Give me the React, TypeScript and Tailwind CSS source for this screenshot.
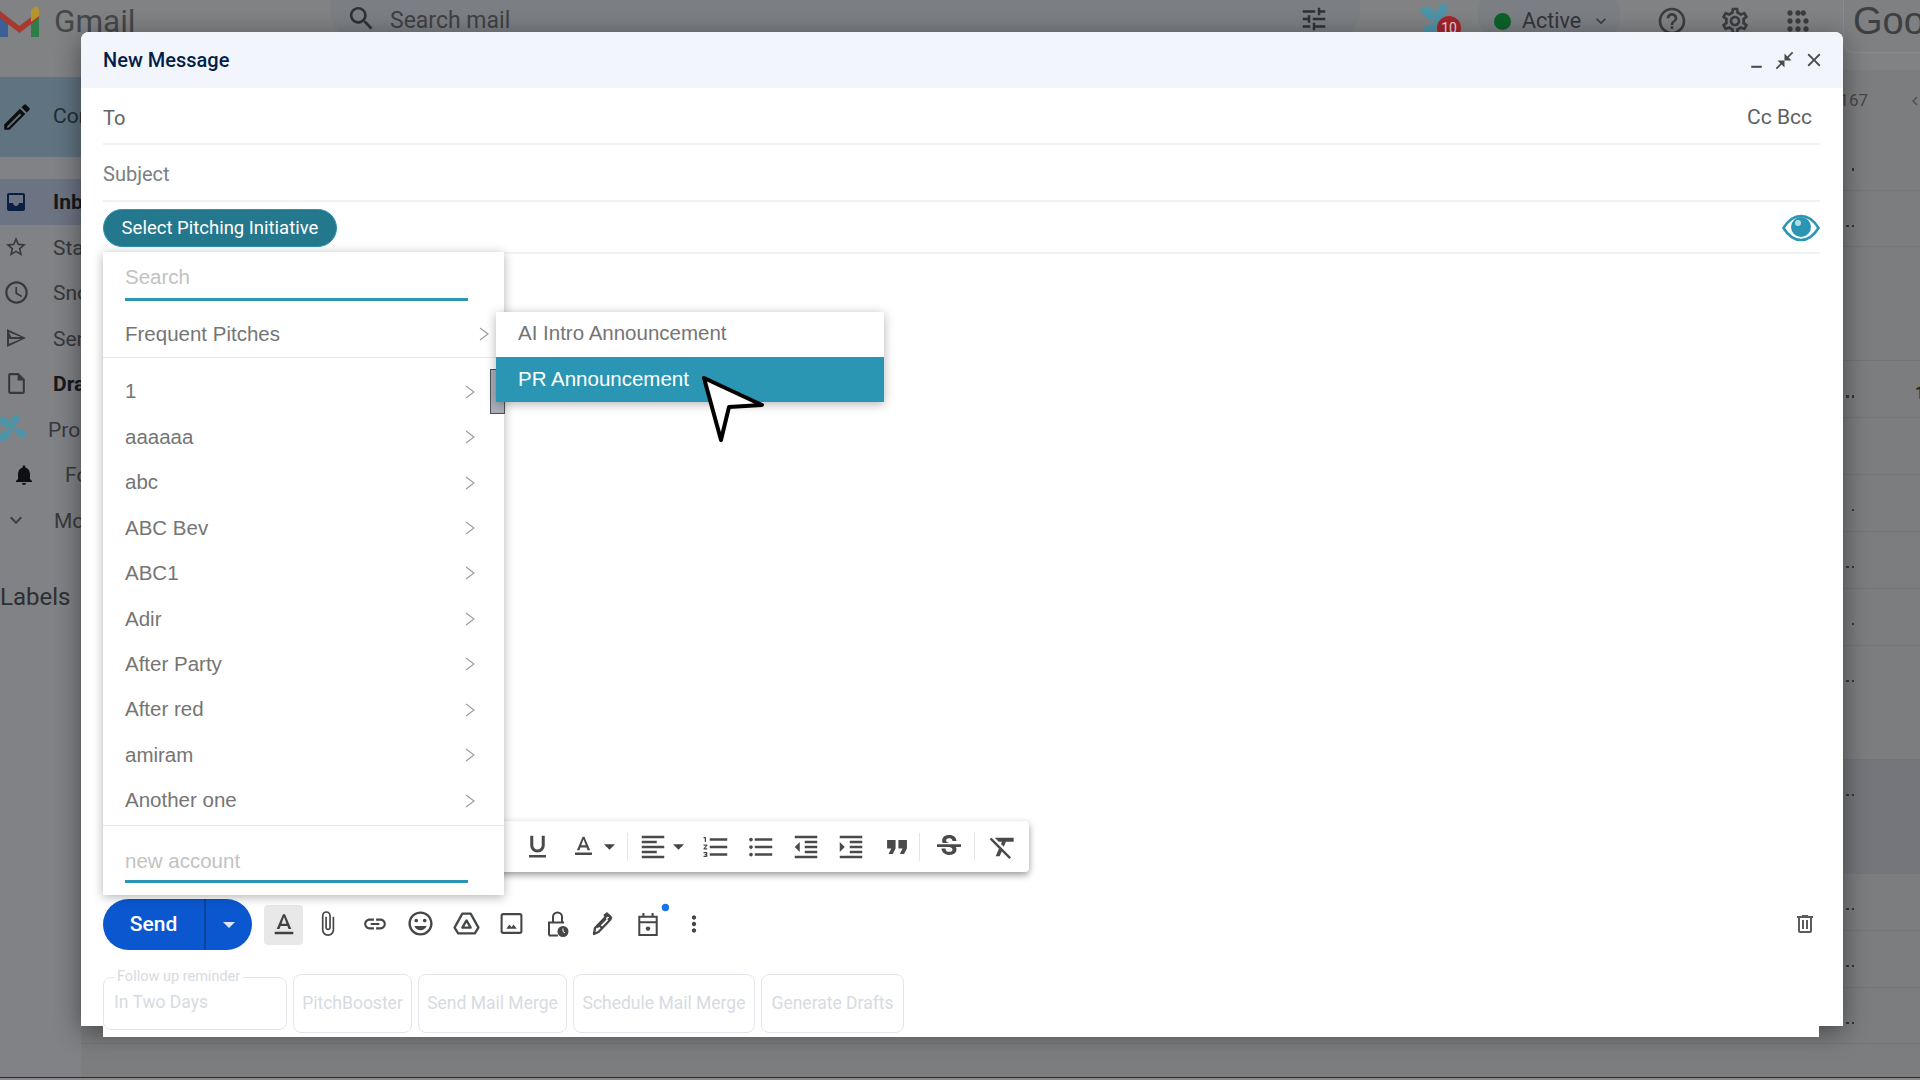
import React from "react";

const P = ({ d, className = "", vb = "0 0 24 24" }: { d: string; className?: string; vb?: string }) => (
  <svg viewBox={vb} className={`shrink-0 ${className}`} fill="currentColor" aria-hidden="true">
    <path d={d} />
  </svg>
);

const Pinwheel = ({ className = "" }: { className?: string }) => (
  <svg viewBox="0 0 32 32" className={className} fill="#4c94a8" aria-hidden="true">
    <path d="M16 16C13 9 15 3 20 0c4 2 5 5 3 8-2 3-4 5-7 8z" />
    <path d="M16 16c7-2 12 0 16 5-2 4-5 5-8 3-3-2-5-5-8-8z" />
    <path d="M16 16c-1 7-5 12-11 14-3-3-3-6-1-9 3-3 7-4 12-5z" />
    <path d="M16 16C10 15 4 12 1 6c3-3 6-4 9-2 3 2 5 7 6 12z" />
  </svg>
);

const Chevron = ({ className = "" }: { className?: string }) => (
  <svg viewBox="0 0 10 14" className={className} fill="none" stroke="#9a9a9a" strokeWidth="1.1" aria-hidden="true">
    <path d="M1 1l8 6-8 6" />
  </svg>
);

const Caret = () => (
  <svg viewBox="0 0 10 5" className="w-[11px] h-[6px] text-[#444] shrink-0" fill="currentColor" aria-hidden="true">
    <path d="M0 0h10L5 5z" />
  </svg>
);

const side = [
  { t: "Inbox", bold: true, box: "w-[32px] ml-0 mr-[21px]", ic: <P className="w-[24px] h-[24px] text-[#0c1f42]" d="M19 3H5c-1.1 0-2 .9-2 2v14c0 1.1.9 2 2 2h14c1.1 0 2-.9 2-2V5c0-1.1-.9-2-2-2zm0 10h-4c0 1.66-1.34 3-3 3s-3-1.34-3-3H5V5h14v8z" />, row: "bg-[#6c7383]" },
  { t: "Starred", box: "w-[32px] ml-0 mr-[21px]", ic: <P className="w-[24px] h-[24px] text-[#38393c]" d="M22 9.24l-7.19-.62L12 2 9.19 8.63 2 9.24l5.46 4.73L5.82 21 12 17.27 18.18 21l-1.63-7.03L22 9.24zM12 15.4l-3.76 2.27 1-4.28-3.32-2.88 4.38-.38L12 6.1l1.71 4.04 4.38.38-3.32 2.88 1 4.28L12 15.4z" /> },
  { t: "Snoozed", box: "w-[32px] ml-0 mr-[21px]", ic: <P className="w-[27px] h-[27px] text-[#38393c]" d="M11.99 2C6.47 2 2 6.48 2 12s4.47 10 9.99 10C17.52 22 22 17.52 22 12S17.52 2 11.99 2zM12 20c-4.42 0-8-3.58-8-8s3.58-8 8-8 8 3.58 8 8-3.58 8-8 8zm.5-13H11v6l5.25 3.15.75-1.23-4.5-2.67z" /> },
  { t: "Sent", box: "w-[32px] ml-0 mr-[21px]", ic: <P className="w-[24px] h-[24px] text-[#38393c]" d="M3 3v18l19-9L3 3zm2 3.2L16.8 11H7.2L5 6.2zM5 17.8V13h11.8L5 17.8z" /> },
  { t: "Drafts", bold: true, box: "w-[32px] ml-0 mr-[21px]", ic: <P className="w-[25px] h-[25px] text-[#38393c]" d="M14 2H6c-1.1 0-2 .9-2 2v16c0 1.1.9 2 2 2h12c1.1 0 2-.9 2-2V8l-6-6zm4 18H6V4h7v5h5v11z" /> },
  { t: "Pro", box: "w-[30px] -ml-[3px] mr-[21px]", ic: <Pinwheel className="w-[30px] h-[30px]" /> },
  { t: "Follow", box: "w-[24px] ml-[12px] mr-[29px]", ic: <P className="w-[24px] h-[24px] text-[#0f1012]" d="M12 22c1.1 0 2-.9 2-2h-4c0 1.1.9 2 2 2zm6-6v-5c0-3.07-1.63-5.64-4.5-6.32V4c0-.83-.67-1.5-1.5-1.5s-1.5.67-1.5 1.5v.68C7.64 5.36 6 7.92 6 11v5l-2 2v1h16v-1l-2-2z" /> },
  { t: "More", box: "w-[32px] ml-0 mr-[22px]", ic: <P className="w-[24px] h-[24px] text-[#3e3f42]" d="M16.59 8.59L12 13.17 7.41 8.59 6 10l6 6 6-6z" /> },
];

const rows = [
  { h: "h-[56.5px]", d: 1 },
  { h: "h-[56.5px]", d: 2 },
  { h: "h-[114px]", d: 0 },
  { h: "h-[56.5px]", d: 2, one: true },
  { h: "h-[57px]", d: 0 },
  { h: "h-[57px]", d: 1 },
  { h: "h-[57px]", d: 2 },
  { h: "h-[57px]", d: 1 },
  { h: "h-[114px]", d: 2 },
  { h: "h-[114px]", d: 2, sel: true },
  { h: "h-[57px]", d: 2 },
  { h: "h-[57px]", d: 2 },
  { h: "h-[56px]", d: 2 },
];

const accounts = ["1", "aaaaaa", "abc", "ABC Bev", "ABC1", "Adir", "After Party", "After red", "amiram", "Another one"];

const fmt = {
  underline: "M12 17c3.31 0 6-2.69 6-6V3h-2.5v8c0 1.93-1.57 3.5-3.5 3.5S8.5 12.93 8.5 11V3H6v8c0 3.31 2.69 6 6 6zm-7 2v2h14v-2H5z",
  color: "M5 17v2h14v-2H5zm4.5-4.2h5l.9 2.2h2.1L12.75 4h-1.5L6.5 15h2.1l.9-2.2zM12 5.98L13.87 11h-3.74L12 5.98z",
  align: "M15 15H3v2h12v-2zm0-8H3v2h12V7zM3 13h18v-2H3v2zm0 8h18v-2H3v2zM3 3v2h18V3H3z",
  num: "M2 17h2v.5H3v1h1v.5H2v1h3v-4H2v1zm1-9h1V4H2v1h1v3zm-1 3h1.8L2 13.1v.9h3v-1H3.2L5 10.9V10H2v1zm5-6v2h14V5H7zm0 14h14v-2H7v2zm0-6h14v-2H7v2z",
  bullet: "M4 10.5c-.83 0-1.5.67-1.5 1.5s.67 1.5 1.5 1.5 1.5-.67 1.5-1.5-.67-1.5-1.5-1.5zm0-6c-.83 0-1.5.67-1.5 1.5S3.17 7.5 4 7.5 5.5 6.83 5.5 6 4.83 4.5 4 4.5zm0 12c-.83 0-1.5.68-1.5 1.5s.68 1.5 1.5 1.5 1.5-.68 1.5-1.5-.67-1.5-1.5-1.5zM7 19h14v-2H7v2zm0-6h14v-2H7v2zm0-8v2h14V5H7z",
  dec: "M11 17h10v-2H11v2zm-8-5l4 4V8l-4 4zm0 9h18v-2H3v2zM3 3v2h18V3H3zm8 6h10V7H11v2zm0 4h10v-2H11v2z",
  inc: "M3 21h18v-2H3v2zM3 8v8l4-4-4-4zm8 9h10v-2H11v2zM3 3v2h18V3H3zm8 6h10V7H11v2zm0 4h10v-2H11v2z",
  quote: "M6 17h3l2-4V7H5v6h3zm8 0h3l2-4V7h-6v6h3z",
  strike: "M6.85 7.08C6.85 4.37 9.45 3 12.24 3c1.64 0 3 .49 3.9 1.28.77.65 1.46 1.73 1.46 3.24h-3.01c0-.31-.05-.59-.15-.85-.29-.86-1.2-1.28-2.25-1.28-1.86 0-2.34 1.02-2.34 1.7 0 .48.25.88.74 1.21.38.25.77.48 1.41.7H7.39c-.21-.34-.54-.89-.54-1.92zM21 12v-2H3v2h9.62c1.15.45 1.96.75 1.96 1.97 0 1-.81 1.67-2.28 1.67-1.54 0-2.93-.54-2.93-2.51H6.4c0 .55.08 1.13.24 1.58.81 2.29 3.29 3.3 5.67 3.3 2.27 0 5.3-.89 5.3-4.05 0-.3-.01-1.16-.48-1.96H21z",
  clear: "M3.27 5L2 6.27l6.97 6.97L6.5 19h3l1.57-3.66L16.73 21 18 19.73 3.55 5.27 3.27 5zM6 5v.18L8.82 8h2.4l-.72 1.68 2.1 2.1L14.21 8H20V5H6z",
};

const Sep = () => <div className="w-px h-[28px] bg-[#e5e5e5] shrink-0" />;

export default function App() {
  return (
    <div className="relative w-[1920px] h-[1080px] overflow-hidden flex flex-col bg-[#7c7d7e] font-[Roboto,sans-serif]">
      {/* Gmail page behind the overlay */}
      <header className="h-[70px] shrink-0 flex items-start bg-[#818283] text-[#3b3d40]">
        <div className="w-[330px] shrink-0 flex items-center pt-[5px]">
          <svg viewBox="0 0 39 31" className="w-[39px] h-[31px]" aria-hidden="true">
            <path d="M0 8v23h8V13z" fill="#3c5f96" />
            <path d="M31 13v18h8V8z" fill="#2f7d4b" />
            <path d="M0 5l19.5 15L39 5v7L19.5 27 0 12z" fill="#a8392f" />
            <path d="M31 4l4-3c2-1 4 1 4 3v6l-8 6z" fill="#b4952b" />
          </svg>
          <span className="ml-[15px] mt-[1px] text-[31.5px] leading-[31px] text-[#45474a]">Gmail</span>
        </div>
        <div className="w-[1030px] h-[62px] -mt-[22px] pt-[22px] pl-[16px] flex items-start rounded-[30px] bg-[#7b7e83]">
          <P className="w-[31px] h-[31px] mt-[3px] text-[#2f3134]" d="M15.5 14h-.79l-.28-.27C15.41 12.59 16 11.11 16 9.5 16 5.91 13.09 3 9.5 3S3 5.91 3 9.5 5.91 16 9.5 16c1.61 0 3.09-.59 4.23-1.57l.27.28v.79l5 4.99L20.49 19l-4.99-5zm-6 0C7.01 14 5 11.99 5 9.5S7.01 5 9.5 5 14 7.01 14 9.5 11.99 14 9.5 14z" />
          <span className="ml-[13px] mt-[8px] text-[23px] leading-[26px] text-[#3f4144]">Search mail</span>
          <P className="ml-auto mr-[31px] mt-[4px] w-[30px] h-[30px] text-[#2f3134]" d="M3 17v2h6v-2H3zM3 5v2h10V5H3zm10 16v-2h8v-2h-8v-2h-2v6h2zM7 9v2H3v2h4v2h2V9H7zm14 4v-2H11v2h10zm-6-4h2V7h4V5h-4V3h-2v6z" />
        </div>
        <div className="relative w-[42px] h-[40px] ml-[59px]">
          <Pinwheel className="w-[38px] h-[38px] mt-[3px]" />
          <span className="absolute left-[18px] top-[16px] w-[24px] h-[24px] rounded-full bg-[#a2262f] text-center text-[14px] leading-[24px] text-[#e8d9d9]">10</span>
        </div>
        <div className="w-[142px] h-[52px] -mt-[11px] pt-[11px] ml-[17px] flex items-start rounded-[24px] bg-[#7b7e83]">
          <div className="w-[17px] h-[17px] mt-[13px] ml-[16px] rounded-full bg-[#0d6128]" />
          <span className="ml-[11px] mt-[9px] text-[21.5px] leading-[24px] text-[#33353a]">Active</span>
          <P className="w-[20px] h-[20px] mt-[11px] ml-[10px] text-[#3b3d40]" d="M16.59 8.59L12 13.17 7.41 8.59 6 10l6 6 6-6z" />
        </div>
        <div className="flex items-center ml-[36px] pt-[5px] gap-[30.5px] text-[#3a3c3f]">
          <P className="w-[32px] h-[32px]" d="M11 18h2v-2h-2v2zm1-16C6.48 2 2 6.48 2 12s4.48 10 10 10 10-4.48 10-10S17.52 2 12 2zm0 18c-4.41 0-8-3.59-8-8s3.59-8 8-8 8 3.59 8 8-3.59 8-8 8zm0-14c-2.21 0-4 1.79-4 4h2c0-1.1.9-2 2-2s2 .9 2 2c0 2-3 1.75-3 5h2c0-2.25 3-2.5 3-5 0-2.21-1.79-4-4-4z" />
          <P className="w-[32px] h-[32px]" d="M19.43 12.98c.04-.32.07-.64.07-.98 0-.34-.03-.66-.07-.98l2.11-1.65c.19-.15.24-.42.12-.64l-2-3.46c-.09-.16-.26-.25-.44-.25-.06 0-.12.01-.17.03l-2.49 1c-.52-.4-1.08-.73-1.69-.98l-.38-2.65C14.46 2.18 14.25 2 14 2h-4c-.25 0-.46.18-.49.42l-.38 2.65c-.61.25-1.17.59-1.69.98l-2.49-1c-.06-.02-.12-.03-.18-.03-.17 0-.34.09-.43.25l-2 3.46c-.13.22-.07.49.12.64l2.11 1.65c-.04.32-.07.65-.07.98 0 .33.03.66.07.98l-2.11 1.65c-.19.15-.24.42-.12.64l2 3.46c.09.16.26.25.44.25.06 0 .12-.01.17-.03l2.49-1c.52.4 1.08.73 1.69.98l.38 2.65c.03.24.24.42.49.42h4c.25 0 .46-.18.49-.42l.38-2.65c.61-.25 1.17-.59 1.69-.98l2.49 1c.06.02.12.03.18.03.17 0 .34-.09.43-.25l2-3.46c.12-.22.07-.49-.12-.64l-2.11-1.65zm-1.98-1.71c.04.31.05.52.05.73 0 .21-.02.43-.05.73l-.14 1.13.89.7 1.08.84-.7 1.21-1.27-.51-1.04-.42-.9.68c-.43.32-.84.56-1.25.73l-1.06.43-.16 1.13-.2 1.35h-1.4l-.19-1.35-.16-1.13-1.06-.43c-.43-.18-.83-.41-1.23-.71l-.91-.7-1.06.43-1.27.51-.7-1.21 1.08-.84.89-.7-.14-1.13c-.03-.31-.05-.54-.05-.74s.02-.43.05-.73l.14-1.13-.89-.7-1.08-.84.7-1.21 1.27.51 1.04.42.9-.68c.43-.32.84-.56 1.25-.73l1.06-.43.16-1.13.2-1.35h1.39l.19 1.35.16 1.13 1.06.43c.43.18.83.41 1.23.71l.91.7 1.06-.43 1.27-.51.7 1.21-1.07.85-.89.7.14 1.13zM12 8c-2.21 0-4 1.79-4 4s1.79 4 4 4 4-1.79 4-4-1.79-4-4-4zm0 6c-1.1 0-2-.9-2-2s.9-2 2-2 2 .9 2 2-.9 2-2 2z" />
          <P className="ml-[1px] w-[32px] h-[32px]" d="M6 8c1.1 0 2-.9 2-2s-.9-2-2-2-2 .9-2 2 .9 2 2 2zm6 12c1.1 0 2-.9 2-2s-.9-2-2-2-2 .9-2 2 .9 2 2 2zm-6 0c1.1 0 2-.9 2-2s-.9-2-2-2-2 .9-2 2 .9 2 2 2zm0-6c1.1 0 2-.9 2-2s-.9-2-2-2-2 .9-2 2 .9 2 2 2zm6 0c1.1 0 2-.9 2-2s-.9-2-2-2-2 .9-2 2 .9 2 2 2zm6-8c0-1.1-.9-2-2-2s-2 .9-2 2 .9 2 2 2 2-.9 2-2zm-6 2c1.1 0 2-.9 2-2s-.9-2-2-2-2 .9-2 2 .9 2 2 2zm6 6c1.1 0 2-.9 2-2s-.9-2-2-2-2 .9-2 2 .9 2 2 2zm0 6c1.1 0 2-.9 2-2s-.9-2-2-2-2 .9-2 2 .9 2 2 2z" />
        </div>
        <div className="ml-auto w-[77px] h-[53px] pl-[9px] rounded-bl-xl border-l border-b border-[#8a8b8d] bg-[#7f8082] overflow-hidden">
          <span className="block text-[38px] leading-[42px] text-[#3d3f42] whitespace-nowrap font-[Liberation_Sans,sans-serif]">Google</span>
        </div>
      </header>

      <div className="flex flex-1 min-h-0">
        <aside className="w-[81px] shrink-0 overflow-hidden pt-[7px] bg-[#808285] text-[21px] text-[#37393c]">
          <div className="h-[80px] flex items-center bg-[#5f7380] whitespace-nowrap">
            <P className="w-[34px] h-[34px] text-[#0d0f11]" d="M3 17.25V21h3.75L17.81 9.94l-3.75-3.75L3 17.25zm2.92 2.33H5v-.92l9.06-9.06.92.92L5.92 19.58zM20.71 7.04a1 1 0 000-1.41l-2.34-2.34a1 1 0 00-1.41 0l-1.83 1.83 3.75 3.75 1.83-1.83z" />
            <span className="ml-[19px] text-[#1f2d36]">Compose</span>
          </div>
          <div className="mt-[22px]">
            {side.map((s) => (
              <div key={s.t} className={`h-[45.5px] flex items-center whitespace-nowrap ${s.row ?? ""}`}>
                <div className={`${s.box} shrink-0 flex justify-center`}>{s.ic}</div>
                <span className={s.bold ? "font-bold text-[#16181c] pt-[1px]" : "pt-[2px]"}>{s.t}</span>
              </div>
            ))}
          </div>
          <div className="mt-[39px] text-[24px] leading-[30px] text-[#2d2f32]">Labels</div>
        </aside>

        <main className="flex-1 min-w-0 flex flex-col">
          <div className="h-[64px] flex items-center justify-end pr-[4px] text-[#45474a]">
            <span className="mr-[38px] text-[17px] -mt-[2px]">167</span>
            <P className="w-[18px] h-[18px] -mt-[2px] -mr-[8px] text-[#4e5053]" d="M15.41 7.41L14 6l-6 6 6 6 1.41-1.41L10.83 12z" />
          </div>
          {rows.map((r, i) => (
            <div key={i} className={`${r.h} relative shrink-0 border-b border-[#747577] flex items-start pt-[34px] justify-end pr-[66px] ${r.sel ? "bg-[#74767b]" : ""}`}>
              <div className="flex gap-[3px]">
                {r.d > 0 && <div className="w-[2.5px] h-[2.5px] bg-[#33363a]" />}
                {r.d > 1 && <div className="w-[2.5px] h-[2.5px] bg-[#33363a]" />}
              </div>
              {r.one && <span className="absolute right-0 top-[18px] text-[18px] font-bold text-[#3a2305] w-[5px] overflow-hidden">1</span>}
            </div>
          ))}
        </main>
      </div>
      <div className="absolute left-0 right-0 bottom-0 h-[3px] border-t border-[#2b2b2b] bg-[#8a8a8a]" />

      {/* Compose window */}
      <section className="absolute left-[81px] top-[32px] w-[1762px] h-[994px] flex flex-col bg-white rounded-t-lg shadow-[0_6px_26px_rgba(0,0,0,0.45)]">
        <div className="h-[56px] shrink-0 rounded-t-lg bg-[#f2f6fc] flex items-center pl-[22px] pr-[18px]">
          <span className="text-[20px] font-medium text-[#041e49] -mt-[1px]">New Message</span>
          <div className="ml-auto flex items-center gap-[8px] text-[#4a4a4a]">
            <P className="w-[21px] h-[21px] ml-[1px] -mr-[1px]" d="M6 18h12v2.4H6z" />
            <P className="w-[21px] h-[21px]" d="M22 3.41L16.71 8.7 20 12h-8V4l3.29 3.29L20.59 2 22 3.41zM3.41 22l5.29-5.29L12 20v-8H4l3.29 3.29L2 20.59 3.41 22z" />
            <P className="w-[22px] h-[22px]" d="M19 6.41L17.59 5 12 10.59 6.41 5 5 6.41 10.59 12 5 17.59 6.41 19 12 13.41 17.59 19 19 17.59 13.41 12z" />
          </div>
        </div>
        <div className="px-[22px] pr-[23px] text-[20px] shrink-0">
          <div className="h-[57px] flex items-center pt-[4px] border-b-2 border-[#eff3f3] text-[#5f6368]">
            <span>To</span>
            <span className="ml-auto mr-[8px] text-[21px] text-[#5b5f63]">Cc Bcc</span>
          </div>
          <div className="h-[57px] flex items-center pt-[2px] border-b-2 border-[#eff3f3] text-[#7b7f83]">
            <span>Subject</span>
          </div>
          <div className="h-[52px] flex items-center border-b-2 border-[#eff3f3]">
            <div className="w-[234px] h-[38px] mt-[2px] pt-[2px] rounded-full bg-[#23788d] border border-[#2b96b3] flex items-center justify-center text-[18.5px] text-white whitespace-nowrap">
              Select Pitching Initiative
            </div>
            <svg viewBox="0 0 38 30" className="ml-auto w-[38px] h-[30px] mt-[2px]" aria-hidden="true">
              <path d="M1.5 15C7 6 13 3 19 3s12 3 17.5 12C31 24 25 27 19 27S7 24 1.5 15z" fill="none" stroke="#2b96b3" strokeWidth="2.6" />
              <circle cx="19" cy="14" r="10" fill="#2b96b3" />
              <circle cx="16" cy="10" r="3" fill="#b4dbe6" />
            </svg>
          </div>
        </div>

        <div className="h-[645px] shrink-0" />

        <div className="h-[51px] shrink-0 mx-[22px] mr-[24px] flex items-center text-[#444746]">
          <div className="w-[149px] h-[51px] flex items-center rounded-full bg-[#0b57d0] text-white">
            <span className="w-[101px] text-center text-[21px] font-medium">Send</span>
            <div className="w-[48px] h-full border-l-2 border-[#08449f] flex items-center justify-center">
              <svg viewBox="0 0 10 5" className="w-[12px] h-[6px]" fill="#dfe8f8" aria-hidden="true">
                <path d="M0 0h10L5 5z" />
              </svg>
            </div>
          </div>
          <div className="ml-[12px] w-[39px] h-[40px] rounded bg-[#e8e8e8] flex items-center justify-center">
            <P className="w-[32px] h-[32px] text-[#424242]" d={fmt.color} />
          </div>
          <div className="flex items-center -mt-[2px]">
            <P className="ml-[11px] w-[27px] h-[27px]" d="M16.5 6v11.5c0 2.21-1.79 4-4 4s-4-1.79-4-4V5c0-1.38 1.12-2.5 2.5-2.5s2.5 1.12 2.5 2.5v10.5c0 .55-.45 1-1 1s-1-.45-1-1V6H10v9.5c0 1.38 1.12 2.5 2.5 2.5s2.5-1.12 2.5-2.5V5c0-2.21-1.79-4-4-4S7 2.79 7 5v12.5c0 3.04 2.46 5.5 5.5 5.5s5.5-2.46 5.5-5.5V6h-1.5z" />
            <P className="ml-[21px] w-[26px] h-[26px]" d="M3.9 12c0-1.71 1.39-3.1 3.1-3.1h4V7H7c-2.76 0-5 2.24-5 5s2.24 5 5 5h4v-1.9H7c-1.71 0-3.1-1.39-3.1-3.1zM8 13h8v-2H8v2zm9-6h-4v1.9h4c1.71 0 3.1 1.39 3.1 3.1s-1.39 3.1-3.1 3.1h-4V17h4c2.76 0 5-2.24 5-5s-2.24-5-5-5z" />
            <P className="ml-[18px] w-[29px] h-[29px]" d="M11.99 2C6.47 2 2 6.48 2 12s4.47 10 9.99 10C17.52 22 22 17.52 22 12S17.52 2 11.99 2zM12 20c-4.42 0-8-3.58-8-8s3.58-8 8-8 8 3.58 8 8-3.58 8-8 8zm3.5-9c.83 0 1.5-.67 1.5-1.5S16.33 8 15.5 8 14 8.67 14 9.5s.67 1.5 1.5 1.5zm-7 0c.83 0 1.5-.67 1.5-1.5S9.33 8 8.5 8 7 8.67 7 9.5 7.67 11 8.5 11zm3.5 6.5c2.33 0 4.31-1.46 5.11-3.5H6.89c.8 2.04 2.78 3.5 5.11 3.5z" />
            <svg viewBox="0 0 26 24" className="ml-[18px] w-[27px] h-[25px]" fill="none" stroke="currentColor" strokeWidth="2.2" strokeLinejoin="round" aria-hidden="true">
              <path d="M9 2.5h8L24.5 16l-3.5 5.5H5L1.5 16z" />
              <path d="M13 9l4 7H9z" />
            </svg>
            <svg viewBox="0 0 24 24" className="ml-[19px] w-[25px] h-[25px]" aria-hidden="true">
              <rect x="2.5" y="3" width="19" height="18" rx="1.5" fill="none" stroke="currentColor" strokeWidth="2" />
              <path d="M7 17l3-4 2 2.5 2-2.5 3 4z" fill="currentColor" />
            </svg>
            <svg viewBox="0 0 24 28" className="ml-[21px] w-[24px] h-[28px]" aria-hidden="true">
              <path d="M4 25.5V12.5h15M8 12V7a4.5 4.5 0 019 0v5M4 25.5h9" fill="none" stroke="currentColor" strokeWidth="2" />
              <circle cx="18" cy="21.5" r="5.5" fill="currentColor" />
              <path d="M18 18.5v3l2 1.5" fill="none" stroke="#fff" strokeWidth="1" />
            </svg>
            <svg viewBox="0 0 24 24" className="ml-[21px] w-[24px] h-[24px]" fill="none" stroke="currentColor" strokeWidth="2.3" strokeLinejoin="round" aria-hidden="true">
              <path d="M4 22l1-6L16 4.5a2.5 2.5 0 014 3.5L8.5 20z" />
              <path d="M7 15.5l9-9M9 13l3 3M14 4l3-2.5 4 4-3 2.5" />
            </svg>
            <svg viewBox="0 0 24 28" className="ml-[23px] w-[22px] h-[26px] overflow-visible shrink-0" aria-hidden="true">
              <path d="M2.5 6h19v20h-19zM2.5 12h19M7 2v5M17 2v5" fill="none" stroke="currentColor" strokeWidth="2.2" />
              <circle cx="12" cy="19" r="2.4" fill="currentColor" />
              <circle cx="31" cy="-4" r="4" fill="#1a73e8" />
            </svg>
            <P className="ml-[22px] w-[26px] h-[26px]" d="M12 8c1.1 0 2-.9 2-2s-.9-2-2-2-2 .9-2 2 .9 2 2 2zm0 2c-1.1 0-2 .9-2 2s.9 2 2 2 2-.9 2-2-.9-2-2-2zm0 6c-1.1 0-2 .9-2 2s.9 2 2 2 2-.9 2-2-.9-2-2-2z" />
          </div>
          <P className="ml-auto mr-[2px] -mt-[2px] w-[24px] h-[24px] text-[#5c5c5c]" d="M15 4V3H9v1H4v2h1v13c0 1.1.9 2 2 2h10c1.1 0 2-.9 2-2V6h1V4h-5zm2 15H7V6h10v13zM9 8h2v9H9zm4 0h2v9h-2z" />
        </div>

        <div className="h-[87px] shrink-0 ml-[22px] mr-[24px] bg-white flex items-start pt-[19px] gap-[6px] text-[17.5px] text-[#d6dbe2]">
          <fieldset className="w-[184px] h-[61px] shrink-0 border-[1.5px] border-[#e2e6ec] rounded-lg pl-[10px]">
            <legend className="px-[3px] text-[14.5px] leading-[16px] text-[#d6dbe2]">Follow up reminder</legend>
            <div className="mt-[5px] leading-[24px]">In Two Days</div>
          </fieldset>
          <div className="w-[119px] h-[59px] mt-[5px] shrink-0 border-[1.5px] border-[#e2e6ec] rounded-lg flex items-center justify-center">PitchBooster</div>
          <div className="w-[149px] h-[59px] mt-[5px] shrink-0 border-[1.5px] border-[#e2e6ec] rounded-lg flex items-center justify-center">Send Mail Merge</div>
          <div className="w-[182px] h-[59px] mt-[5px] shrink-0 border-[1.5px] border-[#e2e6ec] rounded-lg flex items-center justify-center">Schedule Mail Merge</div>
          <div className="w-[143px] h-[59px] mt-[5px] shrink-0 border-[1.5px] border-[#e2e6ec] rounded-lg flex items-center justify-center">Generate Drafts</div>
        </div>

        {/* Floating format bar */}
        <div className="absolute left-[320px] top-[789px] w-[628px] h-[51px] pl-[114px] rounded-r bg-white shadow-[0_3px_7px_rgba(0,0,0,0.4)] flex items-center text-[#4a4a4a]">
          <div className="w-[46px] flex justify-center"><P className="w-[29px] h-[29px]" d={fmt.underline} /></div>
          <div className="w-[66px] pl-[8px] flex items-center gap-[6px]"><P className="w-[29px] h-[29px]" d={fmt.color} /><Caret /></div>
          <Sep />
          <div className="w-[66px] pl-[10px] flex items-center gap-[5px]"><P className="w-[30px] h-[30px]" d={fmt.align} /><Caret /></div>
          <div className="w-[46px] flex justify-center -ml-[1px]"><P className="w-[30px] h-[30px]" d={fmt.num} /></div>
          <div className="w-[45px] flex justify-center"><P className="w-[30px] h-[30px]" d={fmt.bullet} /></div>
          <div className="w-[45px] flex justify-center"><P className="w-[30px] h-[30px]" d={fmt.dec} /></div>
          <div className="w-[46px] flex justify-center"><P className="w-[30px] h-[30px]" d={fmt.inc} /></div>
          <div className="w-[45px] flex justify-center"><P className="w-[34px] h-[34px]" d={fmt.quote} /></div>
          <Sep />
          <div className="w-[54px] pl-[4px] flex justify-center"><P className="w-[32px] h-[32px]" d={fmt.strike} /></div>
          <Sep />
          <div className="w-[52px] flex justify-center ml-[2px]"><P className="w-[32px] h-[32px]" d={fmt.clear} /></div>
        </div>

        {/* Pitch menu */}
        <div className="absolute left-[22px] top-[220px] w-[401px] h-[643px] flex flex-col bg-white shadow-[0_2px_10px_rgba(0,0,0,0.3)] font-[Liberation_Sans,Arial,sans-serif] text-[20.5px] text-[#757575]">
          <div className="h-[49px] mx-[22px] mr-[36px] border-b-[3px] border-[#2b96b3] flex items-end pb-[5px] text-[#c2c2c2] shrink-0">Search</div>
          <div className="h-[57px] pl-[22px] pr-[15px] flex items-center border-b border-[#e6e6e6] shrink-0 pt-[10px]">
            <span>Frequent Pitches</span>
            <Chevron className="ml-auto w-[10px] h-[14px]" />
          </div>
          <div className="pt-[11px] flex-1">
            {accounts.map((a) => (
              <div key={a} className="h-[45.45px] pl-[22px] pr-[29px] flex items-center">
                <span>{a}</span>
                <Chevron className="ml-auto w-[10px] h-[14px]" />
              </div>
            ))}
          </div>
          <div className="h-[70px] border-t border-[#e6e6e6] shrink-0 pt-[20px]">
            <div className="h-[37px] mx-[22px] mr-[36px] border-b-[3px] border-[#2b96b3] flex items-center pb-[4px] text-[#c2c2c2]">new account</div>
          </div>
        </div>

        <div className="absolute left-[409px] top-[337px] w-[15px] h-[45px] bg-[#a9afb8] border border-[#4b5056]" />

        {/* Sub menu */}
        <div className="absolute left-[415px] top-[280px] w-[388px] flex flex-col bg-white shadow-[0_2px_10px_rgba(0,0,0,0.3)] font-[Liberation_Sans,Arial,sans-serif] text-[20.5px]">
          <div className="h-[45px] pl-[22px] pb-[2px] flex items-center text-[#757575]">AI Intro Announcement</div>
          <div className="h-[45px] pl-[22px] flex items-center text-white bg-[#2b96b3]">PR Announcement</div>
        </div>

        {/* Pointer */}
        <svg viewBox="0 0 62 66" className="absolute left-[621px] top-[344px] w-[62px] h-[66px]" aria-hidden="true">
          <path d="M2 2l58 27-33 2-8 33z" fill="#fff" stroke="#000" strokeWidth="4" strokeLinejoin="round" />
        </svg>
      </section>
    </div>
  );
}
